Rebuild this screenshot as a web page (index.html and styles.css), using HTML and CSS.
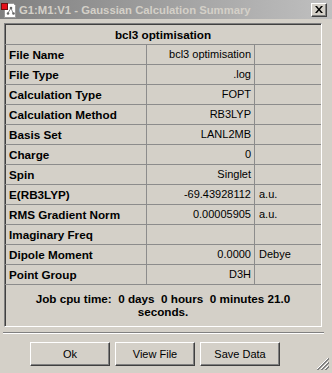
FILE: index.html
```html
<!DOCTYPE html>
<html>
<head>
<meta charset="utf-8">
<link rel="stylesheet" href="styles.css">
</head>
<body>
<div class="window">
  <div class="titlebar">
    <svg class="appicon" width="16" height="16" viewBox="0 0 16 16">
      <path d="M3.5 1.5h9l2 2v12h-11z" fill="#fff" stroke="#9a9a9a"/>
      <line x1="10" y1="6" x2="7" y2="11" stroke="#888" stroke-width="1"/>
      <line x1="10" y1="6" x2="12" y2="11" stroke="#888" stroke-width="1"/>
      <circle cx="10" cy="6" r="1.3" fill="#666"/>
      <circle cx="7" cy="11.5" r="1.3" fill="#666"/>
      <circle cx="12.5" cy="11.5" r="1.3" fill="#666"/>
      <rect x="0.5" y="1.5" width="6" height="6" fill="#e8101a" stroke="#701010"/>
    </svg>
    <span class="title">G1:M1:V1 - Gaussian Calculation Summary</span>
    <div class="closebtn">
      <svg width="8" height="7" viewBox="0 0 8 7"><path d="M0 0h2l2 2.5 2-2.5h2l-3 3.5 3 3.5h-2l-2-2.5-2 2.5h-2l3-3.5z" fill="#000"/></svg>
    </div>
  </div>

  <div class="panel">
    <div class="head">bcl3 optimisation</div>
    <div class="row"><div class="lbl">File Name</div><div class="val">bcl3 optimisation</div><div class="unit"></div></div>
    <div class="row"><div class="lbl">File Type</div><div class="val">.log</div><div class="unit"></div></div>
    <div class="row"><div class="lbl">Calculation Type</div><div class="val">FOPT</div><div class="unit"></div></div>
    <div class="row"><div class="lbl">Calculation Method</div><div class="val">RB3LYP</div><div class="unit"></div></div>
    <div class="row"><div class="lbl">Basis Set</div><div class="val">LANL2MB</div><div class="unit"></div></div>
    <div class="row"><div class="lbl">Charge</div><div class="val">0</div><div class="unit"></div></div>
    <div class="row"><div class="lbl">Spin</div><div class="val">Singlet</div><div class="unit"></div></div>
    <div class="row"><div class="lbl">E(RB3LYP)</div><div class="val">-69.43928112</div><div class="unit">a.u.</div></div>
    <div class="row"><div class="lbl">RMS Gradient Norm</div><div class="val">0.00005905</div><div class="unit">a.u.</div></div>
    <div class="row"><div class="lbl">Imaginary Freq</div><div class="val"></div><div class="unit"></div></div>
    <div class="row"><div class="lbl">Dipole Moment</div><div class="val">0.0000</div><div class="unit">Debye</div></div>
    <div class="row"><div class="lbl">Point Group</div><div class="val">D3H</div><div class="unit"></div></div>
    <div class="foot"><span class="pre">Job cpu time:  0 days  0 hours  0 minutes 21.0</span><br>seconds.</div>
  </div>

  <div class="separator"></div>

  <div class="buttons">
    <div class="btn">Ok</div>
    <div class="btn">View File</div>
    <div class="btn">Save Data</div>
  </div>

  <svg class="grip" width="13" height="13" viewBox="0 0 13 13">
    <line x1="12" y1="1" x2="1" y2="12" stroke="#fff"/>
    <line x1="13" y1="1" x2="1" y2="13" stroke="#808080"/>
    <line x1="13" y1="2" x2="2" y2="13" stroke="#808080"/>
    <line x1="12" y1="5" x2="5" y2="12" stroke="#fff"/>
    <line x1="13" y1="5" x2="5" y2="13" stroke="#808080"/>
    <line x1="13" y1="6" x2="6" y2="13" stroke="#808080"/>
    <line x1="12" y1="9" x2="9" y2="12" stroke="#fff"/>
    <line x1="13" y1="9" x2="9" y2="13" stroke="#808080"/>
    <line x1="13" y1="10" x2="10" y2="13" stroke="#808080"/>
  </svg>
</div>
</body>
</html>
```
FILE: styles.css
```css
html, body {
  margin: 0;
  padding: 0;
  background: #d4d0c8;
}
body {
  width: 332px;
  height: 373px;
  overflow: hidden;
  font-family: "Liberation Sans", Arial, sans-serif;
  color: #000;
}
.window {
  position: relative;
  width: 332px;
  height: 373px;
  display: flex;
  flex-direction: column;
}
.titlebar {
  height: 19px;
  display: flex;
  align-items: center;
  padding: 0 5px 0 1px;
  background: linear-gradient(to right, #808080, #c0c0c0);
  flex-shrink: 0;
}
.appicon {
  display: block;
  flex-shrink: 0;
}
.title {
  margin-left: 2px;
  font-weight: bold;
  font-size: 11.3px;
  color: #d4d0c8;
  white-space: nowrap;
}
.closebtn {
  margin-left: auto;
  width: 16px;
  height: 14px;
  box-sizing: border-box;
  background: #d4d0c8;
  border: 1px solid;
  border-color: #fff #404040 #404040 #fff;
  box-shadow: inset -1px -1px #808080;
  display: flex;
  align-items: center;
  justify-content: center;
}
.closebtn svg { display: block; }
.panel {
  margin: 4px 10px 0 4px;
  width: 318px;
  box-sizing: border-box;
  border: 1px solid;
  border-color: #808080 #fff #fff #808080;
  box-shadow: inset 1px 1px #404040;
}
.head {
  height: 21px;
  box-sizing: border-box;
  border-bottom: 1px solid #8c8c8c;
  text-align: center;
  font-weight: bold;
  font-size: 11.7px;
  line-height: 21px;
}
.row {
  display: grid;
  grid-template-columns: 142px 108px 1fr;
  height: 20px;
  box-sizing: border-box;
  border-bottom: 1px solid #8c8c8c;
}
.row > div {
  line-height: 19px;
  white-space: nowrap;
  overflow: hidden;
}
.lbl {
  font-weight: bold;
  font-size: 11.7px;
  padding-left: 4px;
  border-right: 1px solid #8c8c8c;
}
.val {
  font-size: 11px;
  text-align: right;
  padding-right: 3px;
  border-right: 1px solid #8c8c8c;
}
.unit {
  font-size: 11px;
  padding-left: 4px;
}
.foot {
  height: 41px;
  box-sizing: border-box;
  padding-top: 8px;
  text-align: center;
  font-weight: bold;
  font-size: 11.7px;
  line-height: 12.5px;
}
.pre { white-space: pre; }
.separator {
  margin: 5px 8px 0 3px;
  height: 0;
  border-top: 1px solid #808080;
  border-bottom: 1px solid #fff;
}
.buttons {
  margin-top: 8px;
  padding-left: 30px;
  display: flex;
  gap: 5px;
}
.btn {
  width: 80px;
  height: 24px;
  box-sizing: border-box;
  border: 1px solid;
  border-color: #fff #404040 #404040 #fff;
  box-shadow: inset -1px -1px #808080;
  font-size: 11px;
  line-height: 22px;
  text-align: center;
}
.grip {
  position: absolute;
  right: 3px;
  bottom: 3px;
  display: block;
}
```
